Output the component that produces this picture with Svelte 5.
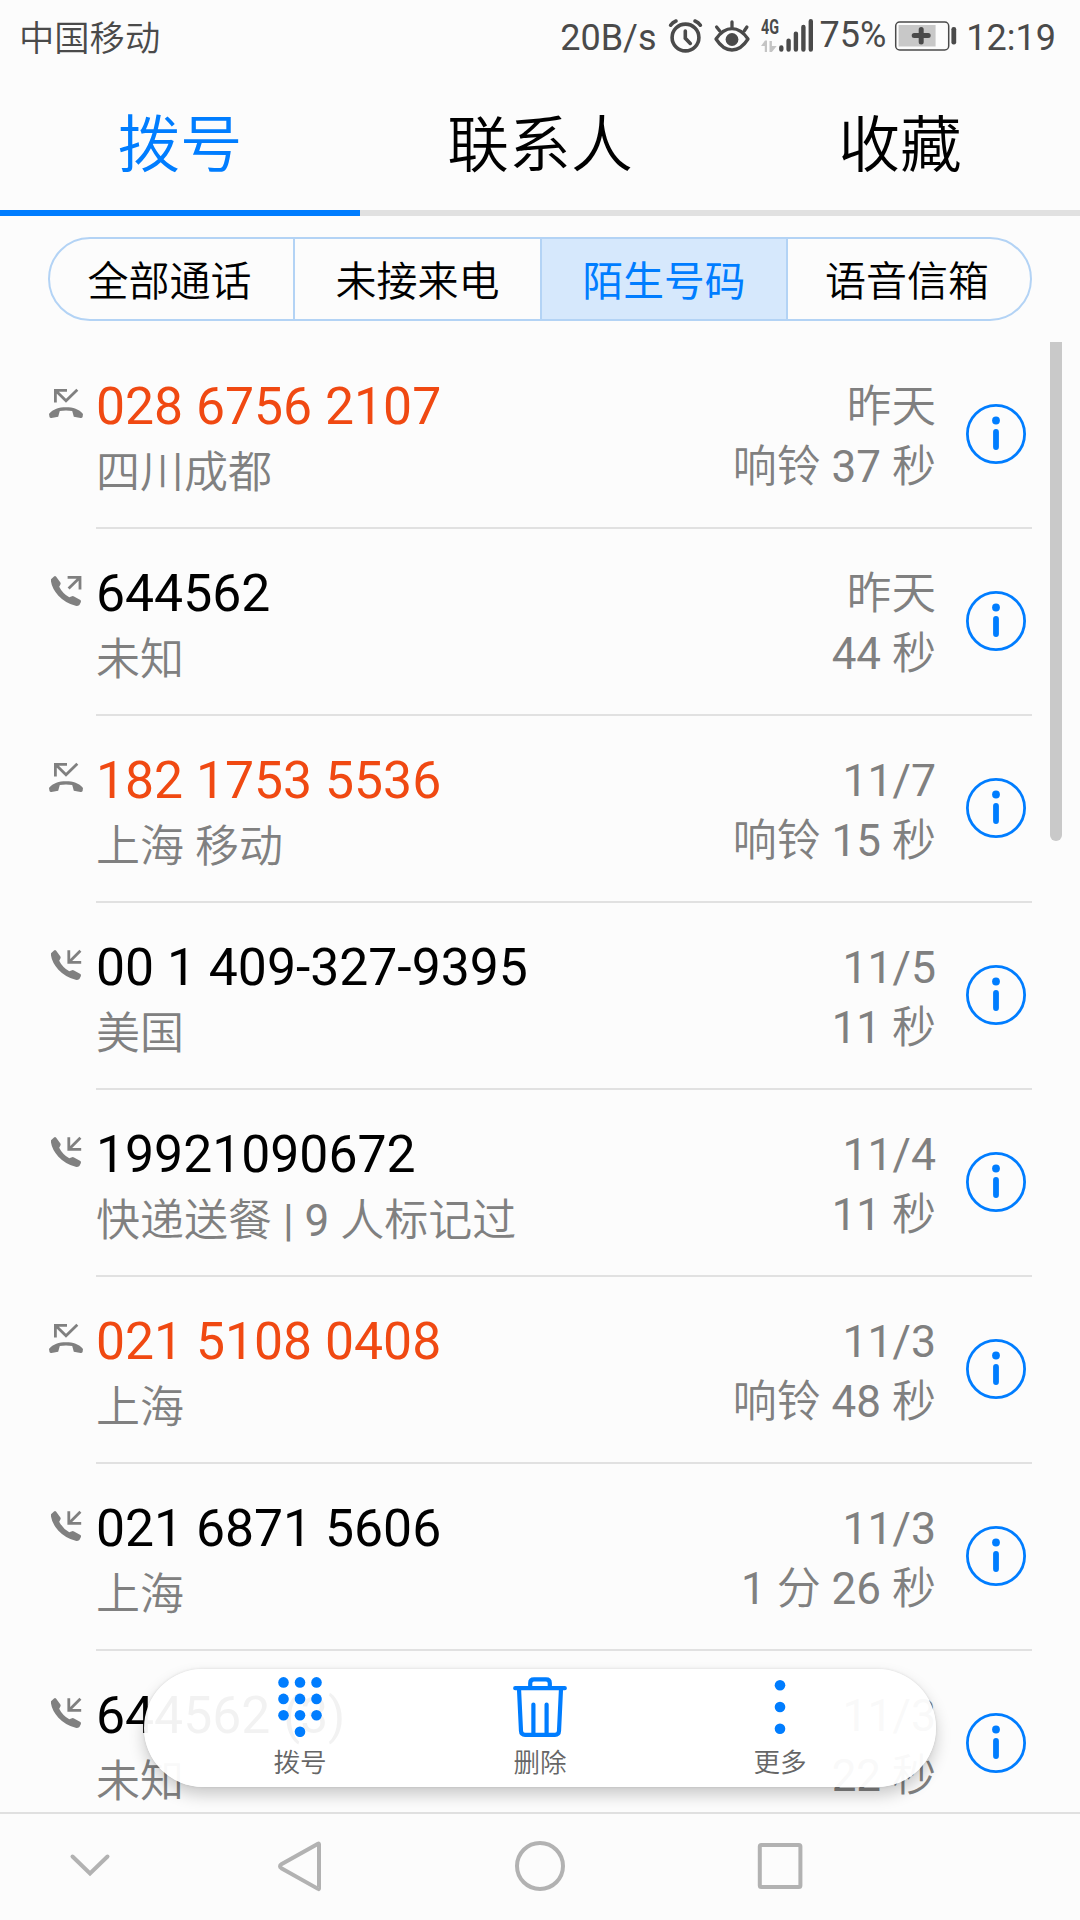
<script>
  const tabs = ['拨号', '联系人', '收藏'];
  const filters = ['全部通话', '未接来电', '陌生号码', '语音信箱'];
  const calls = [
    { type: 'missed', number: '028 6756 2107', place: '四川成都', date: '昨天', length: '响铃 37 秒' },
    { type: 'out', number: '644562', place: '未知', date: '昨天', length: '44 秒' },
    { type: 'missed', number: '182 1753 5536', place: '上海 移动', date: '11/7', length: '响铃 15 秒' },
    { type: 'in', number: '00 1 409-327-9395', place: '美国', date: '11/5', length: '11 秒' },
    { type: 'in', number: '19921090672', place: '快递送餐 | 9 人标记过', date: '11/4', length: '11 秒' },
    { type: 'missed', number: '021 5108 0408', place: '上海', date: '11/3', length: '响铃 48 秒' },
    { type: 'in', number: '021 6871 5606', place: '上海', date: '11/3', length: '1 分 26 秒' },
    { type: 'in', number: '644562', count: '(3)', place: '未知', date: '11/3', length: '22 秒' }
  ];
  const dots = [
    [13.5, 5.4], [30, 5.4], [46.5, 5.4],
    [13.5, 21.9], [30, 21.9], [46.5, 21.9],
    [13.5, 38.3], [30, 38.3], [46.5, 38.3],
    [30, 54.8]
  ];
</script>

<div class="phone">
  <header class="status">
    <span class="carrier">中国移动</span>
    <div class="indicators">
      <span class="speed">20B/s</span>
      <svg class="alarm" width="36" height="36" viewBox="0 0 36 36" fill="none" stroke="#4a4a4a" stroke-width="3.6">
        <circle cx="17.5" cy="19.5" r="13.4" />
        <path d="M17.3 13v7.2l5 5.2" stroke-linecap="round" />
        <path d="M2.6 7.2Q4.6 4.2 8 3M32.4 7.2Q30.4 4.2 27 3" stroke-linecap="round" />
      </svg>
      <svg class="eye" width="36" height="36" viewBox="0 0 36 36" fill="none" stroke="#4a4a4a" stroke-width="3.3" stroke-linecap="round">
        <path d="M2 21Q9 10.6 18 10.6T34 21Q27 32 18 32T2 21Z" stroke-linejoin="round" />
        <circle cx="18" cy="21.5" r="6.4" fill="#4a4a4a" stroke="none" />
        <path d="M18 9V4M5.8 13L2.6 9M30.2 13L32.9 9" />
      </svg>
      <svg class="signal" width="54" height="36" viewBox="0 0 54 36">
        <text x="0" y="16" textLength="18" lengthAdjust="spacingAndGlyphs">4G</text>
        <g fill="#c4c4c4">
          <path d="M0 28L4 22.5H6V34H3.8V28ZM8.5 23h2.4v5h4.8L10.9 34H8.5Z" />
        </g>
        <g stroke="#4a4a4a" stroke-width="4.4" stroke-linecap="round">
          <path d="M20.3 29.5V31.6M27.6 22.6V31.6M34.9 15.6V31.6M42.4 9V31.6M49.8 3.2V31.6" />
        </g>
      </svg>
      <span class="percent">75%</span>
      <svg class="battery" width="64" height="30" viewBox="0 0 64 30">
        <rect x="1.7" y="1" width="53" height="28" rx="4" fill="none" stroke="#4a4a4a" stroke-width="1.5" />
        <rect x="4.6" y="4" width="37" height="21.5" fill="#c8c8c8" />
        <path d="M20.2 14.6H34.2M27.2 8.4V21" stroke="#4a4a4a" stroke-width="5" stroke-linecap="round" />
        <rect x="57.4" y="6" width="4.8" height="17.5" rx="2.2" fill="#4a4a4a" />
      </svg>
      <span class="clock">12:19</span>
    </div>
  </header>

  <nav class="tabs">
    {#each tabs as tab, i}
      <div class="tab" class:active={i === 0}>{tab}</div>
    {/each}
  </nav>

  <div class="filters">
    {#each filters as filter, i}
      <div class="filter" class:selected={i === 2}>{filter}</div>
    {/each}
  </div>

  <main class="log">
    <div class="list">
      {#each calls as call}
        <div class="row">
          <svg class="kind" width="36" height="32" viewBox="0 0 36 32" fill="none" stroke="#808080" stroke-width="2.8">
            {#if call.type === 'missed'}
              <path d="M19 1.4H7.4V13.4M7.6 1.6L18 11.8L29.3 .8" />
              <path d="M1 25C5 20 11 18.3 18 18.3S31 20 35 25L34.6 28Q34 29.3 32.5 29L25.8 27.8L24.2 22Q18 20.8 11.8 22L10.2 27.8L3.5 29Q2 29.3 1.5 28Z" fill="#808080" stroke="none" />
            {:else}
              <path d="M3 3.3L6 .4Q7.2 -.4 8 .6L12.4 6.4Q13 7.4 12.4 8.4L11.2 10.7Q14.6 17.5 21.3 21.3L24 20.2Q25 19.9 26 20.4L32.4 24Q33.4 24.8 32.8 26.2L31.4 29Q29.8 30.2 27.6 29.8Q17.6 27.4 10.4 19.8Q4 12.6 3 5.6Z" fill="#808080" stroke="none" />
              {#if call.type === 'out'}
                <path d="M19.6 1.4H32V13.4M31.6 1.8L20.6 12.6" />
              {:else}
                <path d="M20.8 .2V12.4H33.2M21.2 12L32.4 .8" />
              {/if}
            {/if}
          </svg>
          <div class="content">
            <div class="who">
              <div class="number" class:missed={call.type === 'missed'}>{call.number}{#if call.count}<span class="count">{call.count}</span>{/if}</div>
              <div class="place">{call.place}</div>
            </div>
            <div class="when">
              <div class="date">{call.date}</div>
              <div>{call.length}</div>
            </div>
            <svg class="info" width="60" height="60" viewBox="0 0 60 60">
              <circle cx="30" cy="30" r="28.6" fill="none" stroke="#007dff" stroke-width="2.8" />
              <circle cx="30" cy="16.5" r="3.9" fill="#007dff" />
              <rect x="27.1" y="25" width="5.8" height="21" rx="2.9" fill="#007dff" />
            </svg>
          </div>
        </div>
      {/each}
    </div>
    <div class="scrollbar"></div>
    <div class="toolbar">
      <div class="action">
        <svg width="60" height="60" viewBox="0 0 60 60" fill="#007dff">
          {#each dots as [x, y]}
            <circle cx={x} cy={y} r="5.3" />
          {/each}
        </svg>
        <span>拨号</span>
      </div>
      <div class="action">
        <svg width="60" height="60" viewBox="0 0 60 60" fill="none" stroke="#007dff" stroke-width="4.2" stroke-linecap="round" stroke-linejoin="round">
          <path d="M5.2 11.2H54.8M20.2 10V6.2Q20.2 2.4 24 2.4H36Q39.8 2.4 39.8 6.2V10" />
          <path d="M9 12L11 54Q11.2 57.8 15 57.8H45Q48.8 57.8 49 54L51 12M23.4 27.5V57M36.6 27.5V57" />
        </svg>
        <span>删除</span>
      </div>
      <div class="action">
        <svg width="60" height="60" viewBox="0 0 60 60" fill="#007dff">
          <circle cx="30" cy="8.3" r="5.3" />
          <circle cx="30" cy="30" r="5.3" />
          <circle cx="30" cy="51.8" r="5.3" />
        </svg>
        <span>更多</span>
      </div>
    </div>
  </main>

  <footer class="keys">
    <svg width="180" height="106" viewBox="0 0 180 106">
      <path d="M72.5 42.5L90 59.5L107.5 42.5" stroke-linecap="round" />
    </svg>
    <svg width="240" height="106" viewBox="0 0 240 106">
      <path d="M139 30.2V74.4Q139 75.6 138 74.8L101.4 54.2Q98.6 52.2 101.4 50.2L138 29.8Q139 29 139 30.2Z" />
    </svg>
    <svg width="240" height="106" viewBox="0 0 240 106">
      <circle cx="120" cy="52" r="23" />
    </svg>
    <svg width="240" height="106" viewBox="0 0 240 106">
      <rect x="99.8" y="31" width="40.6" height="42" rx="1.5" />
    </svg>
  </footer>
</div>

<style>
  :global(body) {
    margin: 0;
    background: #fcfcfc;
  }
  .phone {
    width: 1080px;
    height: 1920px;
    display: flex;
    flex-direction: column;
    overflow: hidden;
    background: #fcfcfc;
    color: #000;
    font-family: Roboto, 'Noto Sans CJK SC DemiLight', 'Noto Sans CJK SC', sans-serif;
    font-weight: 400;
    white-space: nowrap;
  }
  svg {
    display: block;
    flex: none;
  }
  .status {
    flex: none;
    height: 72px;
    box-sizing: border-box;
    padding: 0 24px 0 19px;
    display: flex;
    justify-content: space-between;
    color: #4a4a4a;
    font-size: 36px;
    line-height: 40px;
  }
  .carrier {
    padding-top: 19px;
    font-size: 35.3px;
  }
  .indicators {
    display: flex;
    align-items: flex-start;
  }
  .speed,
  .clock {
    padding-top: 18px;
  }
  .percent {
    padding-top: 15px;
    margin-left: 5px;
  }
  .alarm {
    margin: 18px 0 0 11px;
  }
  .eye {
    margin: 18px 0 0 10px;
  }
  .signal {
    margin: 18px 0 0 11px;
    overflow: visible;
  }
  .signal text {
    font: 700 20px Roboto, sans-serif;
    fill: #4a4a4a;
  }
  .battery {
    margin: 21px 8px 0 8px;
  }
  .tabs {
    flex: none;
    display: flex;
    height: 144px;
  }
  .tab {
    flex: 1;
    text-align: center;
    font-size: 61.8px;
    line-height: 148px;
    height: 138px;
    border-bottom: 6px solid #e1e1e1;
  }
  .tab.active {
    color: #007dff;
    border-color: #007dff;
    font-size: 62.4px;
  }
  .filters {
    flex: none;
    display: grid;
    grid-template-columns: 243px 247px 246px 244px;
    height: 80px;
    margin: 21px 48px;
    border: 2px solid #b3d3f5;
    border-radius: 42px;
    overflow: hidden;
  }
  .filter {
    text-align: center;
    font-size: 41px;
    line-height: 86px;
  }
  .filter:first-child,
  .filter:last-child {
    padding-right: 4px;
  }
  .filter + .filter {
    border-left: 2px solid #b3d3f5;
  }
  .filter.selected {
    color: #007dff;
    background: #d6e8fc;
    font-family: Roboto, 'Noto Sans CJK SC', sans-serif;
    font-size: 40.7px;
  }
  .log {
    position: relative;
    height: 1470px;
    flex: none;
    overflow: hidden;
  }
  .row {
    display: flex;
    height: 187px;
    padding: 0 48px;
  }
  .kind {
    margin: 47px 12px 0 0;
    overflow: visible;
  }
  .content {
    flex: 1;
    display: flex;
    border-bottom: 2px solid #e1e1e1;
  }
  .who {
    flex: 1;
    padding-top: 35px;
  }
  .number {
    font-size: 51.7px;
    line-height: 60px;
  }
  .number.missed {
    color: #f04912;
  }
  .count {
    margin-left: 13px;
    font-size: 49.5px;
  }
  .place {
    margin-top: 6px;
    font-size: 44px;
    line-height: 60px;
    color: #808080;
  }
  .when {
    padding-top: 35px;
    margin-right: 30px;
    font-size: 44px;
    line-height: 60px;
    text-align: right;
    color: #808080;
  }
  .date {
    font-size: 44.6px;
  }
  .info {
    margin: 62px 6px 0 0;
  }
  .scrollbar {
    position: absolute;
    top: 0;
    left: 1050px;
    width: 12px;
    height: 499px;
    border-radius: 0 0 6px 6px;
    background: #c9c9c9;
  }
  .toolbar {
    position: absolute;
    left: 144px;
    bottom: 25px;
    width: 792px;
    height: 118px;
    box-sizing: border-box;
    padding: 8px 36px 0;
    display: flex;
    border-radius: 59px;
    background: rgba(255, 255, 255, 0.95);
    box-shadow: 0 8px 16px rgba(0, 0, 0, 0.2), 0 0 3px rgba(0, 0, 0, 0.12);
  }
  .action {
    flex: 1;
    display: flex;
    flex-direction: column;
    align-items: center;
    gap: 11px;
    font-size: 26.6px;
    line-height: 30px;
    color: #666;
  }
  .keys {
    flex: none;
    display: flex;
    border-top: 2px solid #e0e0e0;
    background: #fcfcfc;
  }
  .keys svg {
    fill: none;
    stroke: #b2b2b2;
    stroke-width: 4;
  }
</style>
